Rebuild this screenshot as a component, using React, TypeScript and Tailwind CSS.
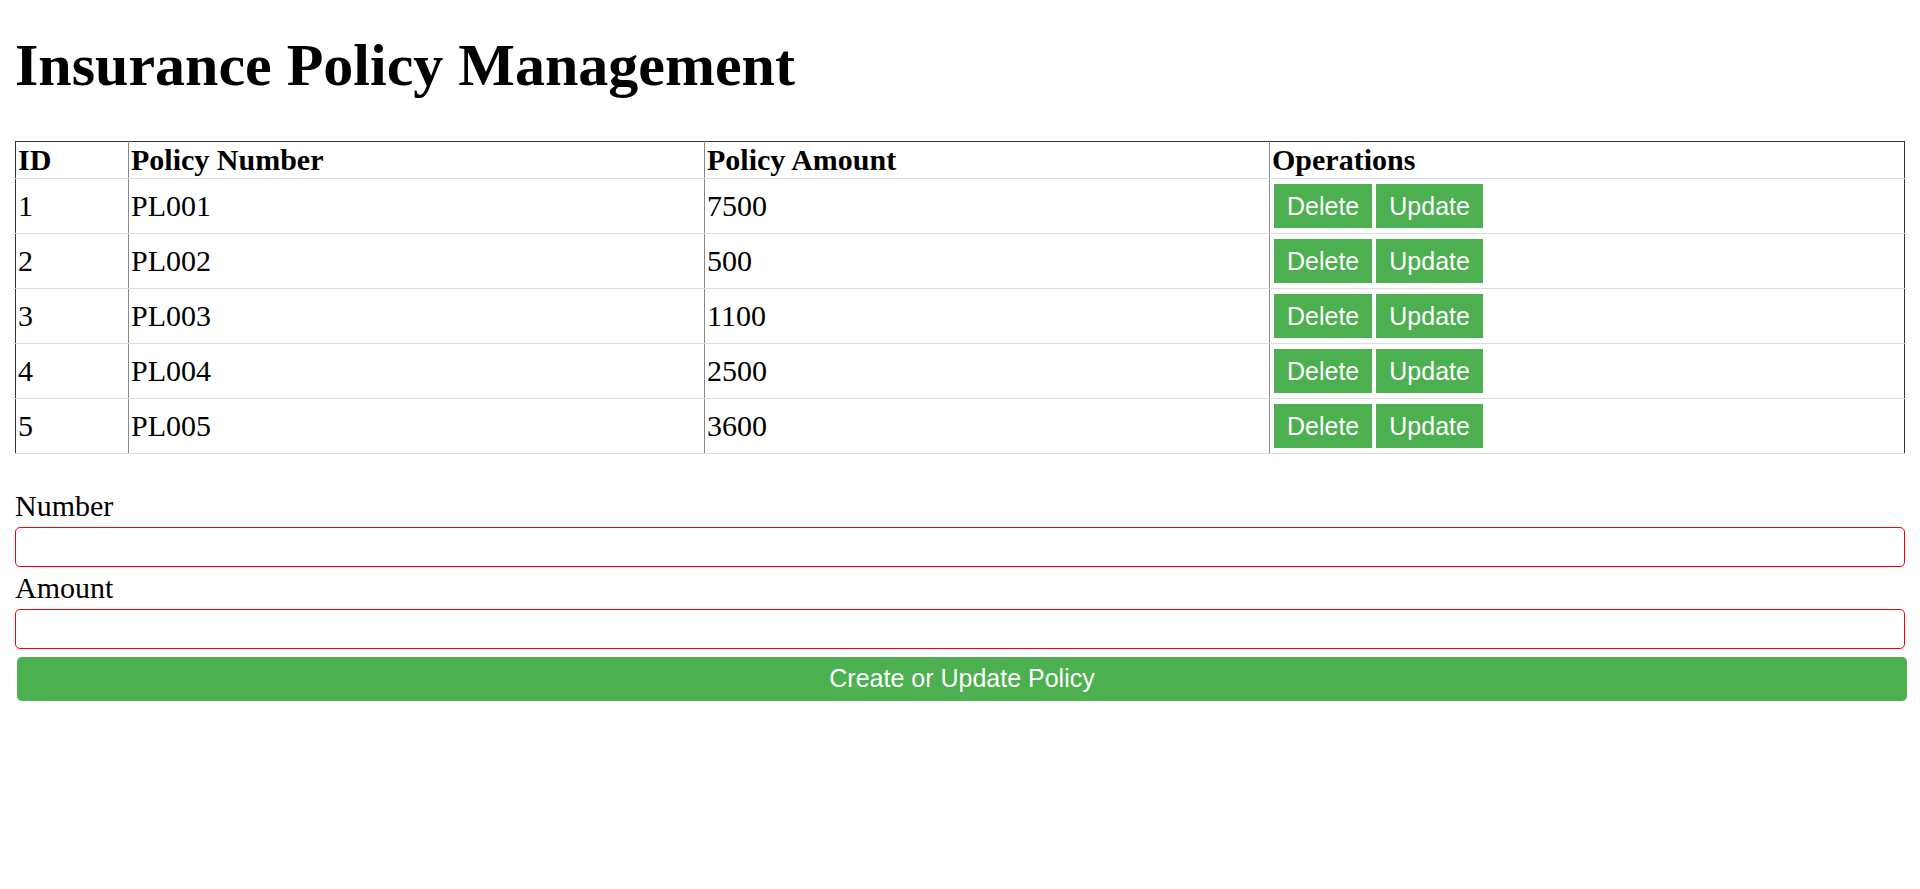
import React, { useState } from 'react'

type Policy = {
    id: number
    number: string
    amount: number
}

const initialPolicies: Policy[] = [
    { id: 1, number: 'PL001', amount: 7500 },
    { id: 2, number: 'PL002', amount: 500 },
    { id: 3, number: 'PL003', amount: 1100 },
    { id: 4, number: 'PL004', amount: 2500 },
    { id: 5, number: 'PL005', amount: 3600 },
]

function App() {
    const [policies, setPolicies] = useState<Policy[]>(initialPolicies)
    const [number, setNumber] = useState('')
    const [amount, setAmount] = useState('')
    const [editId, setEditId] = useState<number | null>(null)

    const handleDelete = (id: number) => {
        setPolicies(policies.filter((p) => p.id !== id))
    }

    const handleEdit = (p: Policy) => {
        setEditId(p.id)
        setNumber(p.number)
        setAmount(String(p.amount))
    }

    const handleSubmit = (e: React.FormEvent) => {
        e.preventDefault()
        if (!number || !amount) return
        if (editId !== null) {
            setPolicies(policies.map((p) => (p.id === editId ? { ...p, number, amount: Number(amount) } : p)))
        } else {
            const nextId = policies.length ? Math.max(...policies.map((p) => p.id)) + 1 : 1
            setPolicies([...policies, { id: nextId, number, amount: Number(amount) }])
        }
        setEditId(null)
        setNumber('')
        setAmount('')
    }

    return (
        <div className="min-h-screen bg-white text-black px-[15px] pt-[31px] font-['Liberation_Serif','Times_New_Roman',serif]">
            <h1 className="text-[60px] leading-[69px] font-bold mb-[41px]">Insurance Policy Management</h1>

            {/* Policy table */}
            <table className="w-full table-fixed border-collapse border-t border-l border-r border-[#333] text-[30px] leading-[34px]">
                <colgroup>
                    <col className="w-[113px]" />
                    <col className="w-[576px]" />
                    <col className="w-[565px]" />
                    <col />
                </colgroup>
                <thead>
                    <tr>
                        <th className="text-left font-bold px-[2px] py-[1px] border-b border-[#ddd]">ID</th>
                        <th className="text-left font-bold px-[2px] py-[1px] border-b border-l border-b-[#ddd] border-l-[#888]">Policy Number</th>
                        <th className="text-left font-bold px-[2px] py-[1px] border-b border-l border-b-[#ddd] border-l-[#888]">Policy Amount</th>
                        <th className="text-left font-bold px-[2px] py-[1px] border-b border-l border-b-[#ddd] border-l-[#888]">Operations</th>
                    </tr>
                </thead>
                <tbody>
                    {policies.map((p) => (
                        <tr key={p.id}>
                            <td className="px-[2px] py-[5px] border-b border-[#ddd]">{p.id}</td>
                            <td className="px-[2px] py-[5px] border-b border-l border-b-[#ddd] border-l-[#888]">{p.number}</td>
                            <td className="px-[2px] py-[5px] border-b border-l border-b-[#ddd] border-l-[#888]">{p.amount}</td>
                            <td className="pl-[4px] py-[5px] border-b border-l border-b-[#ddd] border-l-[#888]">
                                <div className="flex gap-[4px]">
                                    <button
                                        onClick={() => handleDelete(p.id)}
                                        className="h-[44px] px-[13px] bg-[#4caf50] text-white text-[25px] leading-[29px] font-['Liberation_Sans',Arial,sans-serif] cursor-pointer"
                                    >
                                        Delete
                                    </button>
                                    <button
                                        onClick={() => handleEdit(p)}
                                        className="h-[44px] px-[13px] bg-[#4caf50] text-white text-[25px] leading-[29px] font-['Liberation_Sans',Arial,sans-serif] cursor-pointer"
                                    >
                                        Update
                                    </button>
                                </div>
                            </td>
                        </tr>
                    ))}
                </tbody>
            </table>

            {/* Form */}
            <form onSubmit={handleSubmit} className="mt-[35px] flex flex-col text-[30px]">
                <label htmlFor="number" className="leading-[34px]">Number</label>
                <input
                    id="number"
                    value={number}
                    onChange={(e) => setNumber(e.target.value)}
                    className="mt-[4px] h-[40px] w-full border border-[#ff0000] rounded-[5px] px-[6px] text-[25px] outline-none"
                />
                <label htmlFor="amount" className="mt-[4px] leading-[34px]">Amount</label>
                <input
                    id="amount"
                    value={amount}
                    onChange={(e) => setAmount(e.target.value)}
                    className="mt-[4px] h-[40px] w-full border border-[#ff0000] rounded-[5px] px-[6px] text-[25px] outline-none"
                />
                <button
                    type="submit"
                    className="mt-[8px] ml-[2px] h-[44px] w-full bg-[#4caf50] text-white text-[25px] rounded-[5px] font-['Liberation_Sans',Arial,sans-serif] cursor-pointer"
                >
                    Create or Update Policy
                </button>
            </form>
        </div>
    )
}

export default App
